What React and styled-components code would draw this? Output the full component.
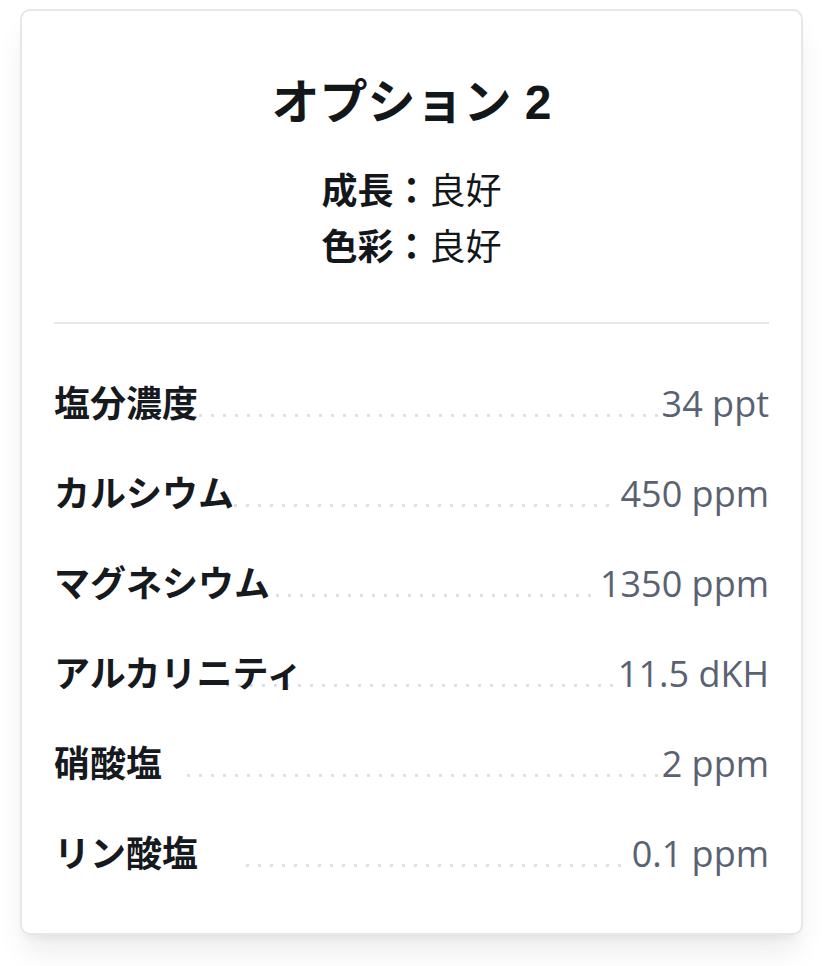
import styled, { createGlobalStyle } from "styled-components";

const GlobalStyle = createGlobalStyle`
    body {
        margin: 0;
        background: #ffffff;
        font-family: "Noto Sans CJK JP", "Noto Sans", sans-serif;
    }
`;

const Page = styled.div`
    padding: 9px 21px 40px 20px;
`;

const Card = styled.section`
    background: #ffffff;
    border: 2px solid #e6e7e9;
    border-radius: 10px;
    padding: 32px 32px 37px;
    box-shadow: 0 20px 30px -6px rgba(17, 24, 39, 0.09), 0 8px 12px -8px rgba(17, 24, 39, 0.09);
`;

const Header = styled.header`
    padding: 24px 0 50px;
    text-align: center;
    border-bottom: 2px solid #e6e7e9;
`;

const Title = styled.h2`
    margin: 0 0 21px;
    font-family: "Liberation Sans", "Noto Sans CJK JP", sans-serif;
    font-size: 48px;
    line-height: 72px;
    font-weight: 700;
    color: #14171a;
`;

const Rating = styled.p`
    margin: 0;
    font-size: 36px;
    line-height: 56px;
    color: #14171a;

    strong {
        font-weight: 700;
    }
`;

const Rows = styled.div`
    padding-top: 32px;
`;

const Row = styled.div`
    display: flex;
    align-items: baseline;
    box-sizing: border-box;
    height: 90px;
    padding: 18px 0;
    line-height: 54px;
`;

const Label = styled.span`
    position: relative;
    z-index: 1;
    font-size: 36px;
    font-weight: 700;
    color: #16191d;
    white-space: nowrap;
`;

const Dots = styled.span`
    flex: 1;
    height: 3px;
    margin-left: ${(props) => props.$lead}px;
    margin-right: 3px;
    background-image: linear-gradient(to right, #dfe0e2 3px, transparent 3px);
    background-size: 12px 3px;
    background-repeat: repeat-x;
`;

const Value = styled.span`
    font-family: "Open Sans", "Noto Sans", sans-serif;
    font-size: 36px;
    color: #5a6272;
    white-space: nowrap;
`;

// lead = where the dotted leader starts, relative to the end of the label
const params = [
    { label: "塩分濃度", value: "34 ppt", lead: 1 },
    { label: "カルシウム", value: "450 ppm", lead: 0 },
    { label: "マグネシウム", value: "1350 ppm", lead: 6 },
    { label: "アルカリニティ", value: "11.5 dKH", lead: -76 },
    { label: "硝酸塩", value: "2 ppm", lead: 25 },
    { label: "リン酸塩", value: "0.1 ppm", lead: 48 },
];

const App = () => {
    return (
        <Page>
            <GlobalStyle />
            <Card>
                <Header>
                    <Title>オプション 2</Title>
                    <Rating><strong>成長：</strong>良好</Rating>
                    <Rating><strong>色彩：</strong>良好</Rating>
                </Header>
                <Rows>
                    {params.map((p) => (
                        <Row key={p.label}>
                            <Label>{p.label}</Label>
                            <Dots $lead={p.lead} />
                            <Value>{p.value}</Value>
                        </Row>
                    ))}
                </Rows>
            </Card>
        </Page>
    );
};

export default App;
